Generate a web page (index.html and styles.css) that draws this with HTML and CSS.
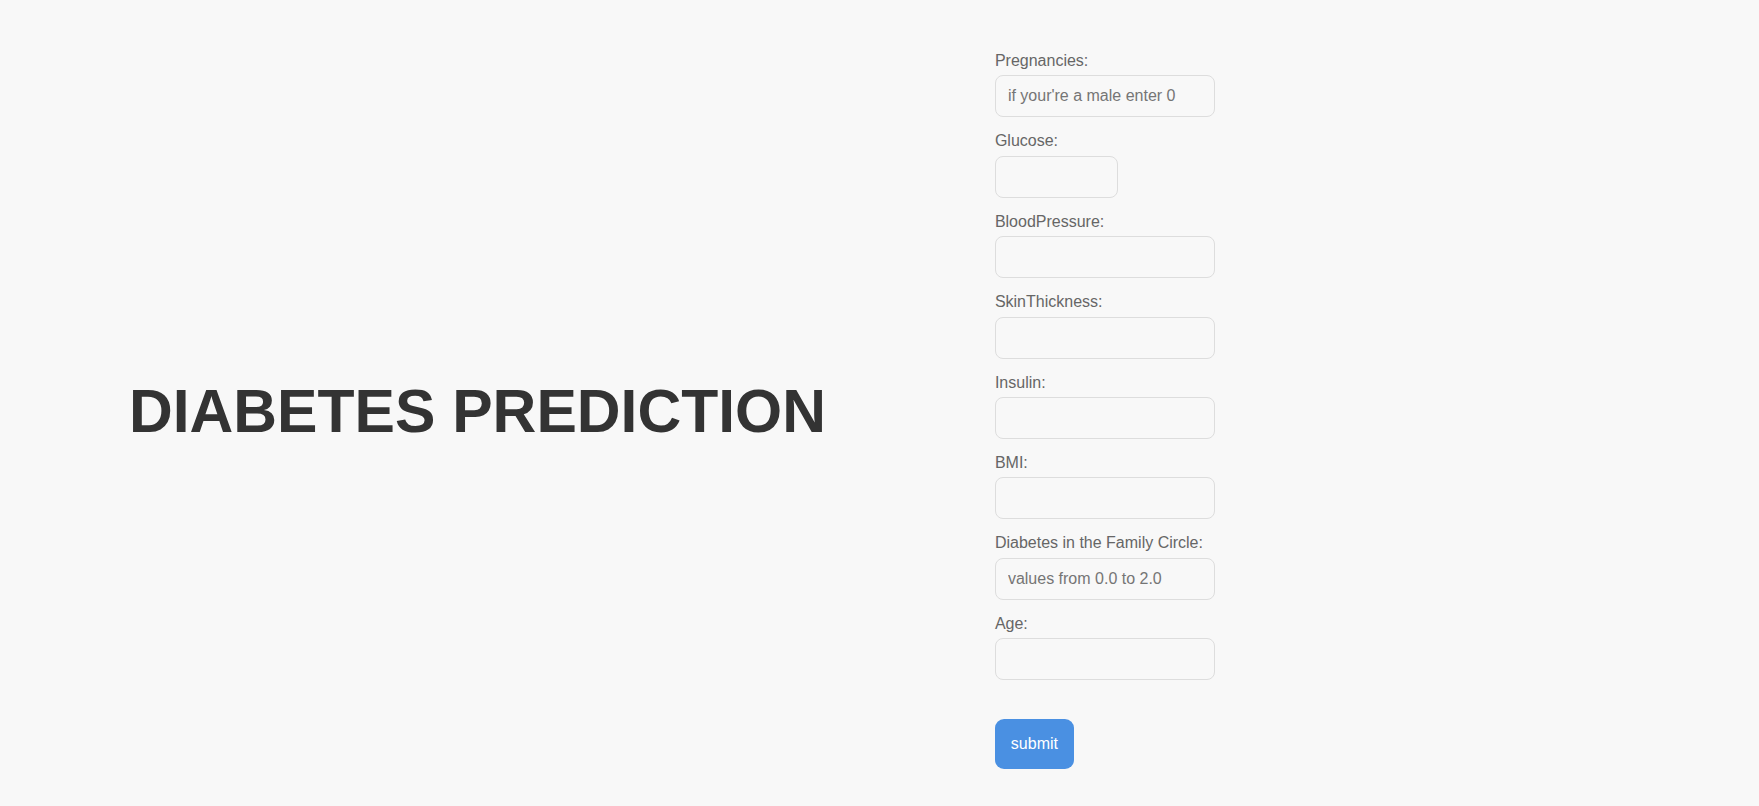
FILE: index.html
```html
<!DOCTYPE html>
<html lang="en">
<head>
<meta charset="utf-8">
<title>Diabetes Prediction</title>
<link rel="stylesheet" href="styles.css">
</head>
<body>
<main class="page">
  <section class="intro">
    <h1 class="title">DIABETES PREDICTION</h1>
  </section>
  <form class="form">
    <label class="label" for="preg">Pregnancies:</label>
    <input class="field" id="preg" type="text" placeholder="if your're a male enter 0">
    <label class="label" for="glu">Glucose:</label>
    <input class="field field-short" id="glu" type="text">
    <label class="label" for="bp">BloodPressure:</label>
    <input class="field" id="bp" type="text">
    <label class="label" for="skin">SkinThickness:</label>
    <input class="field" id="skin" type="text">
    <label class="label" for="ins">Insulin:</label>
    <input class="field" id="ins" type="text">
    <label class="label" for="bmi">BMI:</label>
    <input class="field" id="bmi" type="text">
    <label class="label" for="dpf">Diabetes in the Family Circle:</label>
    <input class="field" id="dpf" type="text" placeholder="values from 0.0 to 2.0">
    <label class="label" for="age">Age:</label>
    <input class="field field-last" id="age" type="text">
    <button class="submit" type="submit">submit</button>
  </form>
</main>
</body>
</html>
```
FILE: styles.css
```css
* {
  box-sizing: border-box;
}

html, body {
  margin: 0;
  padding: 0;
  background: #f8f8f8;
  font-family: "Liberation Sans", Arial, sans-serif;
}

.page {
  display: flex;
  align-items: center;
  height: 806px;
  padding-left: 129px;
  padding-top: 15px;
  gap: 169px;
}

.intro {
  flex: 0 0 auto;
}

.title {
  margin: 0;
  font-size: 60.6px;
  font-weight: 700;
  color: #333333;
  line-height: 70px;
  white-space: nowrap;
}

.form {
  display: flex;
  flex-direction: column;
  align-items: flex-start;
  width: 220px;
}

.label {
  display: block;
  font-size: 16px;
  line-height: 18.4px;
  color: #666666;
  margin-bottom: 5px;
}

.field {
  display: block;
  width: 220px;
  height: 42px;
  margin: 0 0 15px 0;
  padding: 0 12px;
  border: 1px solid #dddddd;
  border-radius: 8px;
  background: #f8f8f8;
  font-family: "Liberation Sans", Arial, sans-serif;
  font-size: 16px;
  color: #555555;
  outline: none;
}

.field::placeholder {
  color: #757575;
}

.field-short {
  width: 123px;
}

.field-last {
  margin-bottom: 39px;
}

.submit {
  display: block;
  width: 79px;
  height: 50px;
  padding: 0;
  border: none;
  border-radius: 9px;
  background: #4a90e2;
  color: #ffffff;
  font-family: "Liberation Sans", Arial, sans-serif;
  font-size: 16px;
  cursor: pointer;
}
```
